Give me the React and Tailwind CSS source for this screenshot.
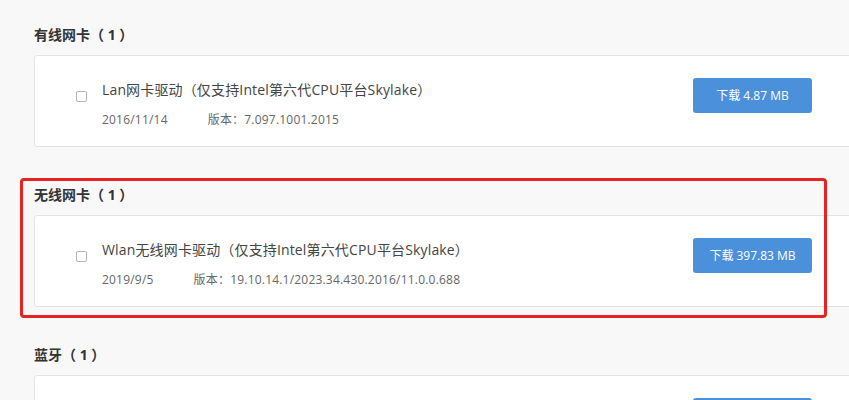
import React from "react";

const sections = [
  {
    heading: "有线网卡",
    title: "Lan网卡驱动（仅支持Intel第六代CPU平台Skylake）",
    date: "2016/11/14",
    version: "版本：7.097.1001.2015",
    size: "下载 4.87 MB",
  },
  {
    heading: "无线网卡",
    title: "Wlan无线网卡驱动（仅支持Intel第六代CPU平台Skylake）",
    date: "2019/9/5",
    version: "版本：19.10.14.1/2023.34.430.2016/11.0.0.688",
    size: "下载 397.83 MB",
  },
  {
    heading: "蓝牙",
    title: "",
    date: "",
    version: "",
    size: "",
  },
];

export default function App() {
  return (
    <div
      className="relative w-[849px] h-[400px] overflow-hidden bg-[#f8f8f8]"
      style={{ fontFamily: '"Open Sans", "Noto Sans CJK SC", sans-serif' }}
    >
      <div className="flex flex-col gap-[38px] pt-[25px] pl-[34px]">
        {sections.map((s, i) => (
          <div key={i} className="flex flex-col gap-[10px]">
            <div className="h-[20px] leading-[20px] text-[14px] font-bold text-[#333]">
              {s.heading}（ 1 ）
            </div>
            <div className="w-[840px] h-[92px] bg-white border border-[#e3e3e3] rounded-[3px] flex items-start">
              <div className="mt-[35px] ml-[41px] w-[11px] h-[11px] border border-[#b5b5b5] rounded-[2px] bg-white shrink-0" />
              <div className="ml-[15px] mt-[24px] flex flex-col gap-[10px] w-[560px]">
                <div className="h-[20px] leading-[20px] text-[14px] text-[#444] whitespace-nowrap tracking-[0.15px]">
                  {s.title}
                </div>
                <div className="h-[20px] leading-[20px] text-[12px] text-[#666] flex whitespace-nowrap tracking-[0.2px]">
                  <span>{s.date}</span>
                  {s.version && <span className="ml-[40px]">{s.version}</span>}
                </div>
              </div>
              <button className="mt-[22px] ml-[31px] w-[119px] h-[35px] rounded-[3px] bg-[#4a90db] text-white text-[12px] shrink-0">
                {s.size}
              </button>
            </div>
          </div>
        ))}
      </div>
      <div className="absolute left-[20px] top-[178px] w-[807px] h-[140px] border-[3px] border-[#e5231f] rounded-[4px] pointer-events-none" />
    </div>
  );
}
